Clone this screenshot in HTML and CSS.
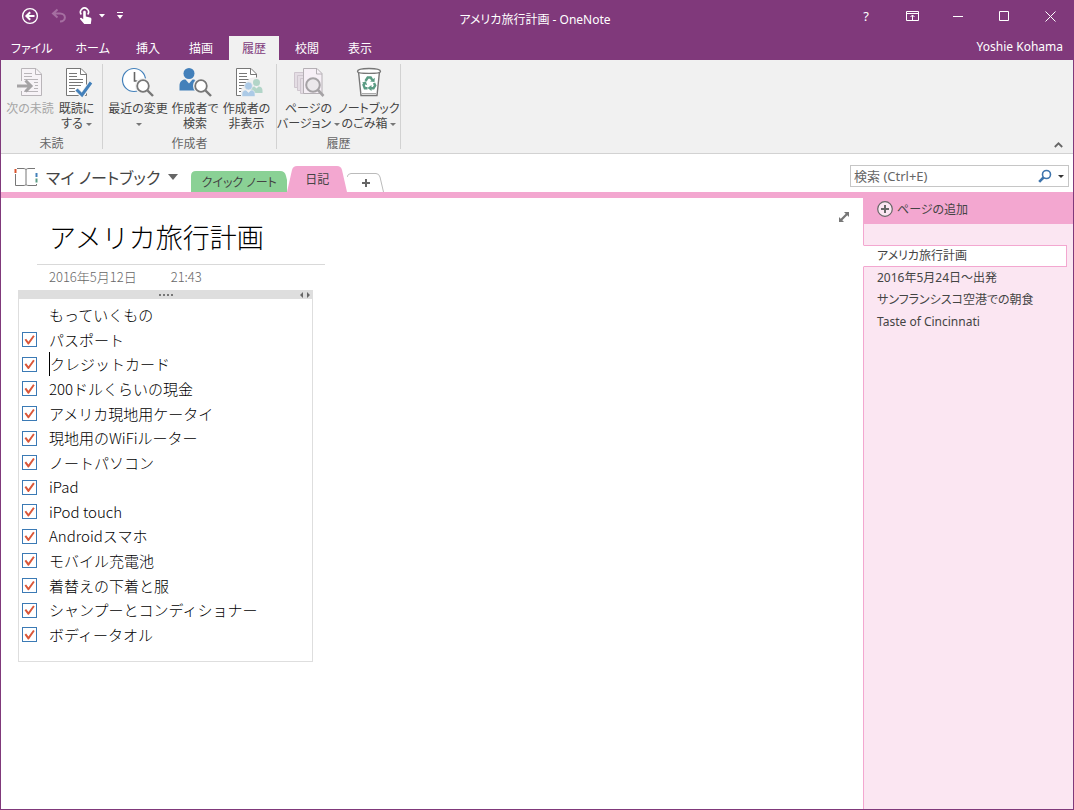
FILE: index.html
```html
<!DOCTYPE html>
<html lang="ja">
<head>
    <meta charset="UTF-8">
    <meta name="viewport" content="width=device-width, initial-scale=1.0">
    <title>アメリカ旅行計画 - OneNote</title>
    <link rel="stylesheet" href="styles.css">
</head>
<body>
    <div class="window">
        <header class="titlebar">
            <div class="quick-access">
                <button class="qa-button" aria-label="戻る">
                    <svg width="18" height="18" viewBox="0 0 18 18" fill="none" stroke="#fff"><circle cx="9" cy="9" r="7.4" stroke-width="1.4"/><path d="M13.5 9H6M9.2 5.2 5.4 9l3.8 3.8" stroke-width="2"/></svg>
                </button>
                <button class="qa-button" aria-label="元に戻す" disabled>
                    <svg width="16" height="16" viewBox="0 0 16 16" fill="none" stroke="#a56fa1" stroke-width="2"><path d="M6.5 1.5 2 5.5l4.5 4M2.5 5.5H9c6.5 0 6.5 8 0 8"/></svg>
                </button>
                <button class="qa-button qa-touch" aria-label="タッチ/マウス モードの切り替え">
                    <svg width="14" height="18" viewBox="0 0 14 18"><path d="M2.3 7.5a4 4 0 1 1 6.4 0" fill="none" stroke="#fff" stroke-width="1.6"/><path d="M4.2 5c0-1.8 2.600-1.800 2.600 0v4.500l4.200 1c1.200.3 1.600 1 1.400 2.200L11.800 17H5.200L1.200 12.300c-.8-1 .4-2 1.400-1.200l1.600 1.100z" fill="#fff"/></svg>
                    <svg width="6" height="4" viewBox="0 0 6 4"><path d="M0 0h6L3 3.500z" fill="#fff"/></svg>
                </button>
                <button class="qa-button" aria-label="クイック アクセス ツール バーのカスタマイズ">
                    <svg width="6" height="8" viewBox="0 0 6 8" fill="#fff"><path d="M0 0h6v1H0zM0 3h6L3 7z"/></svg>
                </button>
            </div>
            <div class="window-title">アメリカ旅行計画 - OneNote</div>
            <div class="window-controls">
                <button aria-label="ヘルプ">?</button>
                <button aria-label="リボンの表示オプション">
                    <svg width="13" height="10" viewBox="0 0 13 10" fill="none" stroke="#fff"><path d="M.5.5h12v9H.5zM.5 2.500h12M6.500 9V4M4.500 6l2-2 2 2"/></svg>
                </button>
                <button aria-label="最小化">
                    <svg width="10" height="10" viewBox="0 0 10 10"><path d="M0 5h10v1H0z" fill="#fff"/></svg>
                </button>
                <button aria-label="最大化">
                    <svg width="10" height="10" viewBox="0 0 10 10"><path d="M.5.5h9v9h-9z" fill="none" stroke="#fff"/></svg>
                </button>
                <button aria-label="閉じる">
                    <svg width="11" height="11" viewBox="0 0 11 11"><path d="m.5.5 10 10m0-10-10 10" stroke="#fff"/></svg>
                </button>
            </div>
        </header>

        <nav class="ribbon-tabs">
            <button class="ribbon-tab kana">ファイル</button>
            <button class="ribbon-tab kana">ホーム</button>
            <button class="ribbon-tab">挿入</button>
            <button class="ribbon-tab">描画</button>
            <button class="ribbon-tab active">履歴</button>
            <button class="ribbon-tab">校閲</button>
            <button class="ribbon-tab">表示</button>
            <a class="account" href="#">Yoshie Kohama</a>
        </nav>

        <div class="ribbon">
            <section class="group">
                <div class="group-buttons unread">
                    <button class="tool" disabled>
                        <svg width="32" height="32" viewBox="0 0 32 32" fill="none" stroke="#b9b5b9"><path d="M7.500 15V2.500H22l5.500 5.500v21.500h-20V25" fill="#f7f3f7"/><path d="M21.500 2.500v6h6M10 7.500h8M10 10.500h8M10 13.500h14M20 16.500h4M21 19.500h3M20 22.500h4M10 25.500h14"/><path d="M3 20h13M11.500 14.500 17 20l-5.500 5.500" stroke="#a5a3a5" stroke-width="3"/></svg>
                        <span>次の未読</span>
                    </button>
                    <button class="tool">
                        <svg width="32" height="32" viewBox="0 0 32 32" fill="none" stroke="#777"><path d="M5.500 2.500H20l5.500 5.500v21.500h-20z" fill="#fff"/><path d="M19.500 2.500v6h6M8 7.500h8M8 10.500h8M8 13.500h14M8 16.500h14M8 19.500h12M8 22.500h6M8 25.500h6"/><path d="m15.500 23.500 5.500 6 9-13" stroke="#f1f1f1" stroke-width="5"/><path d="m15.500 23.500 5.500 5.500 9-12.500" stroke="#4380ba" stroke-width="3"/></svg>
                        <span>既読に<br>する<i class="caret"></i></span>
                    </button>
                </div>
                <div class="group-name">未読</div>
            </section>
            <section class="group">
                <div class="group-buttons authors">
                    <button class="tool">
                        <svg width="34" height="32" viewBox="0 0 34 32" fill="none"><circle cx="13" cy="14" r="11.500" fill="#fff" stroke="#4380ba" stroke-width="1.200"/><path d="M13.500 6v9H19" stroke="#666" stroke-width="1.600"/><circle cx="22" cy="20" r="8" fill="#f1f1f1"/><path d="m26 24 6.500 6.500" stroke="#f1f1f1" stroke-width="5"/><circle cx="22" cy="20" r="5.800" fill="#fff" stroke="#777" stroke-width="1.800"/><path d="m26.500 24.500 5.500 5.500" stroke="#777" stroke-width="2.400"/></svg>
                        <span>最近の変更<br><i class="caret"></i></span>
                    </button>
                    <button class="tool">
                        <svg width="34" height="32" viewBox="0 0 34 32" fill="none"><circle cx="11" cy="7.500" r="5.500" fill="#4380ba"/><path d="M1.500 24.500V20c0-5 3-6.500 6-6.500l3.500 4 3.500-4c3 0 5.500 1.500 6 6.500v4.500z" fill="#4380ba"/><circle cx="23" cy="20" r="8" fill="#f1f1f1"/><circle cx="23" cy="20" r="5.800" fill="#fff" stroke="#777" stroke-width="1.800"/><path d="m27.500 24.500 5.500 5.500" stroke="#777" stroke-width="2.400"/></svg>
                        <span>作成者で<br>検索</span>
                    </button>
                    <button class="tool">
                        <svg width="32" height="32" viewBox="0 0 32 32" fill="none"><path d="M5.500 2.500H20l5.500 5.500v21.500h-20z" fill="#fff" stroke="#777"/><path d="M19.500 2.500v6h6M8 7.500h8M8 10.500h8M8 13.500h14M8 16.500h7M8 19.500h6M8 22.500h4M8 25.500h4" stroke="#777"/><path d="M10 31v-6c0-4 3-6 7-6l-2-3 4-4 6-1 4 4v5l3 3v8z" fill="#f1f1f1"/><circle cx="25.500" cy="16.500" r="3.500" fill="#b2d5c8"/><path d="M20 27v-2.500c0-2.500 1.500-4 3.500-4l2 2 2-2c2.500 0 4 1.500 4 4V27z" fill="#b2d5c8"/><circle cx="17.500" cy="20" r="4" fill="#accae6" stroke="#f1f1f1" stroke-width=".6"/><path d="M11 30.500V28c0-2.500 1.500-4 4-4l2.500 2.500L20 24c2.500 0 4 1.500 4 4v2.500z" fill="#accae6" stroke="#f1f1f1" stroke-width=".6"/></svg>
                        <span>作成者の<br>非表示</span>
                    </button>
                </div>
                <div class="group-name">作成者</div>
            </section>
            <section class="group">
                <div class="group-buttons history">
                    <button class="tool">
                        <svg width="32" height="32" viewBox="0 0 32 32" fill="none"><g fill="#e4dde4" stroke="#cfc6cf"><path d="M1.500 6.500h14v15h-14z"/><path d="M4.500 9.500h14v15h-14z"/><path d="M7.500 12.500h14v15h-14z"/></g><path d="M10.500 2.500H24l5 5v20H10.500z" fill="#f6eff6" stroke="#b5b0b5"/><path d="M23.500 2.500v5.500H29" stroke="#b5b0b5"/><circle cx="20" cy="19" r="6.800" fill="#ebe8eb" stroke="#a5a2a5" stroke-width="2"/><path d="m25 24 5.500 6" stroke="#a5a2a5" stroke-width="2.600"/></svg>
                        <span>ページの<br>バージョン<i class="caret"></i></span>
                    </button>
                    <button class="tool">
                        <svg width="32" height="32" viewBox="0 0 32 32" fill="none"><path d="M5.500 5.500h21L24 29.500H8z" fill="#fff" stroke="#777" stroke-width="1.400"/><path d="M4.500 5.500c0-4 23-4 23 0 0 2.500-23 2.500-23 0z" fill="#fff" stroke="#777" stroke-width="1.400"/><path d="M9 27.500h14" stroke="#aaa"/><g stroke="#5b9c84" stroke-width="2.400"><path d="m12.500 15 2.200-3.500h3l1.600 2.700"/><path d="m21 17 1.200 2.500-1.700 2.700h-3"/><path d="M14.500 22.200h-2.700L10.500 19l1.300-2"/></g><path d="m17 15.500 4.500.5.300-4.300zM18.500 19v6l-4-3zM9 16.800l3.800-1.500 1.400 4z" fill="#5b9c84"/></svg>
                        <span>ノートブック<br>のごみ箱<i class="caret"></i></span>
                    </button>
                </div>
                <div class="group-name">履歴</div>
            </section>
            <button class="collapse" aria-label="リボンを折りたたむ">
                <svg width="9" height="6" viewBox="0 0 9 6"><path d="m.8 5 3.700-3.700L8.200 5" fill="none" stroke="#666" stroke-width="1.800"/></svg>
            </button>
        </div>

        <div class="section-bar">
            <button class="notebook">
                <svg width="24" height="20" viewBox="0 0 24 20" fill="none" stroke="#777"><path d="M3 1.500h6c2 0 3 .5 3 1.500 0-1 1-1.500 3-1.500h6M1.500 7v11.500H9c2 0 3-.3 3-1 0 .7 1 1 3 1h7.500V17M12 3v14.500"/><path d="M1.500 2v4" stroke="#d9532c" stroke-width="2"/><path d="M22.500 6v4" stroke="#4380ba" stroke-width="2"/><path d="M22.500 11.500v4" stroke="#5b9c84" stroke-width="2"/></svg>
                <span>マイ ノートブック</span>
                <svg width="10" height="6" viewBox="0 0 10 6"><path d="M0 0h10L5 6z" fill="#666"/></svg>
            </button>
            <div class="section-tabs">
                <button class="section-tab quick">
                    <svg class="tab-shape" viewBox="0 0 96 21" preserveAspectRatio="none"><path d="M0 21V5q0-5 5-5h84q5 0 6 5l1 4v12z" fill="#8ad195"/></svg>
                    <span>クイック ノート</span>
                </button>
                <button class="section-tab diary">
                    <svg class="tab-shape" viewBox="0 0 60 26" preserveAspectRatio="none"><path d="M0 26 5 4q1-4 5-4h40q4 0 5 4l5 22z" fill="#f3a7d0"/></svg>
                    <span>日記</span>
                </button>
                <button class="section-tab add" aria-label="新しいセクションの作成">
                    <svg class="tab-shape" viewBox="0 0 37 19" preserveAspectRatio="none"><path d="M0 4q1-3.500 4-3.500h25q3 0 4 3.500l3.500 15" fill="none" stroke="#bbb"/></svg>
                    <svg width="8" height="8" viewBox="0 0 8 8"><path d="M4 0v8M0 4h8" stroke="#666" stroke-width="2"/></svg>
                </button>
            </div>
            <form class="search">
                <input type="text" placeholder="検索 (Ctrl+E)" aria-label="検索">
                <button type="button" aria-label="検索を実行">
                    <svg width="14" height="14" viewBox="0 0 14 14" fill="none" stroke="#3e74ac"><circle cx="8.500" cy="5.500" r="4" stroke-width="1.600"/><path d="M5.500 8.500 1.200 12.800" stroke-width="2.600"/></svg>
                    <svg width="6" height="3" viewBox="0 0 6 3"><path d="M0 0h6L3 3z" fill="#333"/></svg>
                </button>
            </form>
        </div>

        <div class="workspace">
            <main class="canvas">
                <article class="page">
                    <h1>アメリカ旅行計画</h1>
                    <div class="stamp"><span>2016年5月12日</span><span>21:43</span></div>
                    <div class="note">
                        <div class="note-handle">
                            <svg width="14" height="2" viewBox="0 0 14 2" fill="#777"><path d="M0 0h2v2H0zM4 0h2v2H4zM8 0h2v2H8zM12 0h2v2h-2z"/></svg>
                            <svg class="resize" width="10" height="6" viewBox="0 0 10 6" fill="#666"><path d="M3 0v6L0 3zM7 0v6l3-3z"/></svg>
                        </div>
                        <div class="note-body">
                            <div class="row plain">もっていくもの</div>
                            <label class="row"><input type="checkbox" checked><span>パスポート</span></label>
                            <label class="row"><input type="checkbox" checked><span class="cursor">クレジットカード</span></label>
                            <label class="row"><input type="checkbox" checked><span>200ドルくらいの現金</span></label>
                            <label class="row"><input type="checkbox" checked><span>アメリカ現地用ケータイ</span></label>
                            <label class="row"><input type="checkbox" checked><span>現地用のWiFiルーター</span></label>
                            <label class="row"><input type="checkbox" checked><span>ノートパソコン</span></label>
                            <label class="row"><input type="checkbox" checked><span>iPad</span></label>
                            <label class="row"><input type="checkbox" checked><span>iPod touch</span></label>
                            <label class="row"><input type="checkbox" checked><span>Androidスマホ</span></label>
                            <label class="row"><input type="checkbox" checked><span>モバイル充電池</span></label>
                            <label class="row"><input type="checkbox" checked><span>着替えの下着と服</span></label>
                            <label class="row"><input type="checkbox" checked><span>シャンプーとコンディショナー</span></label>
                            <label class="row"><input type="checkbox" checked><span>ボディータオル</span></label>
                        </div>
                    </div>
                </article>
                <button class="expand" aria-label="全画面表示">
                    <svg width="12" height="12" viewBox="0 0 12 12" fill="#777"><path d="M6 1h5v5L9.300 4.300 4.300 9.300 6 11H1V6l1.700 1.700 5-5z"/></svg>
                </button>
            </main>
            <aside class="pages">
                <button class="add-page">
                    <svg width="16" height="16" viewBox="0 0 16 16"><circle cx="8" cy="8" r="7.300" fill="#fbe6f2" stroke="#666" stroke-width="1.200"/><path d="M8 4v8M4 8h8" stroke="#666" stroke-width="2"/></svg>
                    <span>ページの追加</span>
                </button>
                <nav class="page-list">
                    <a class="current" href="#">アメリカ旅行計画</a>
                    <a href="#">2016年5月24日～出発</a>
                    <a href="#">サンフランシスコ空港での朝食</a>
                    <a href="#">Taste of Cincinnati</a>
                </nav>
            </aside>
        </div>
    </div>
</body>
</html>
```
FILE: styles.css
```css
* { margin: 0; padding: 0; box-sizing: border-box; }
body {
    font-family: "Noto Sans", "Noto Sans CJK JP", sans-serif;
    font-size: 12px;
    font-feature-settings: "palt";
    color: #444;
    background: #fff;
}
button, input {
    font: inherit;
    font-feature-settings: inherit;
    color: inherit;
    background: none;
    border: none;
}
button { display: flex; align-items: center; justify-content: center; white-space: nowrap; }
a { color: inherit; text-decoration: none; }
svg { display: block; flex: none; }

.window {
    min-height: 100vh;
    display: flex;
    flex-direction: column;
    border: 1px solid #80397b;
    border-top: none;
}

/* title bar */
.titlebar {
    display: grid;
    grid-template-columns: 1fr auto 1fr;
    height: 36px;
    background: #80397b;
    color: #fff;
}
.quick-access { display: flex; align-items: center; gap: 12px; height: 32px; padding-left: 20px; }
.qa-touch { gap: 6px; }
.window-title { align-self: center; padding: 2px 4px 0 0; }
.window-controls { display: flex; justify-content: flex-end; height: 32px; font-size: 13px; }
.window-controls button { width: 46px; }

/* ribbon tabs */
.ribbon-tabs {
    display: flex;
    gap: 3px;
    height: 24px;
    background: #80397b;
    color: #fff;
}
.ribbon-tab { padding: 0 13px; }
.ribbon-tab.kana { padding: 0 10px; }
.ribbon-tab.active { background: #f1f1f1; color: #80397b; }
.account { margin-left: auto; padding-right: 10px; line-height: 22px; }

/* ribbon */
.ribbon {
    display: flex;
    height: 94px;
    padding: 4px 0;
    background: #f1f1f1;
    border-bottom: 1px solid #d2d2d2;
}
.group {
    display: flex;
    flex-direction: column;
    justify-content: space-between;
    border-right: 1px solid #d2d2d2;
}
.group-buttons { display: grid; padding: 2px 4px 0; }
.unread { grid-template-columns: 50px 43px; }
.authors { grid-template-columns: 62px 52px 51px; }
.group-buttons.history { grid-template-columns: 61px 60px; padding: 2px 1px 0; }
.tool {
    flex-direction: column;
    justify-content: flex-start;
    gap: 3px;
    line-height: 15px;
}
.tool:disabled { color: #a6a6a6; }
.caret {
    display: inline-block;
    margin-left: 3px;
    vertical-align: middle;
    border: 3px solid transparent;
    border-top-color: #777;
    border-bottom: none;
}
.group-name { text-align: center; line-height: 10px; color: #666; }
.collapse { margin: auto 10px 1px auto; }

/* notebook and sections */
.section-bar {
    display: flex;
    align-items: flex-end;
    height: 44px;
    border-bottom: 6px solid #f3a7d0;
}
.notebook { align-self: center; gap: 8px; padding: 8px 13px 0; font-size: 16px; }
.section-tabs { display: flex; align-items: flex-end; }
.section-tab { position: relative; }
.section-tab span { position: relative; }
.tab-shape { position: absolute; inset: 0; width: 100%; height: 100%; }
.quick { width: 96px; height: 21px; }
.diary { width: 60px; height: 26px; }
.add { width: 37px; height: 19px; }
.search {
    display: flex;
    width: 219px;
    height: 22px;
    margin: 0 4px 5px auto;
    border: 1px solid #c6c6c6;
    font-size: 13px;
}
.search input { flex: 1; min-width: 0; padding-left: 3px; outline: none; }
.search input::placeholder { color: #666; }
.search button { gap: 6px; padding: 0 4px; }

/* page area */
.workspace { flex: 1; display: flex; }
.canvas { flex: 1; display: flex; justify-content: space-between; align-items: flex-start; padding-left: 17px; }
.page {
    width: 307px;
    padding-top: 18px;
    font-family: "Noto Sans CJK JP", sans-serif;
    font-feature-settings: normal;
    color: #000;
}
.page h1 {
    margin-left: 19px;
    padding: 0 0 6px 12px;
    border-bottom: 1px solid #d9d9d9;
    font-size: 27px;
    font-weight: 300;
    line-height: 42px;
    white-space: nowrap;
}
.stamp {
    display: flex;
    gap: 34px;
    padding: 0 0 2px 31px;
    font-size: 13px;
    font-weight: 300;
    line-height: 23px;
    color: #666;
}
.note { width: 295px; border: 1px solid #dedede; border-top: none; }
.note-handle {
    position: relative;
    display: flex;
    align-items: center;
    justify-content: center;
    height: 9px;
    background: #dedede;
}
.resize { position: absolute; right: 2px; }
.note-body {
    display: grid;
    grid-auto-rows: 1fr;
    min-height: 362px;
    padding: 4px 3px 14px;
    font-size: 15px;
    font-weight: 300;
    line-height: 24px;
}
.row { display: flex; align-items: center; gap: 12px; }
.row.plain { padding-left: 27px; }
.row input {
    appearance: none;
    width: 15px;
    height: 15px;
    border: 1px solid #3b7ab5;
    background: #fff;
}
.row input:checked::before {
    content: "";
    display: block;
    height: 13px;
    background: #d9573a;
    clip-path: polygon(12% 50%, 24% 41%, 42% 64%, 78% 14%, 90% 22%, 45% 86%, 38% 86%);
}
.cursor { border-left: 1px solid #000; }
.expand { padding: 13px 13px 0 0; }

/* page list */
.pages { width: 210px; background: #fbe6f2; border-left: 1px solid #f3a7d0; color: #444; }
.add-page {
    width: 100%;
    height: 26px;
    gap: 4px;
    justify-content: flex-start;
    padding: 0 0 4px 13px;
    background: #f3a7d0;
}
.page-list { display: flex; flex-direction: column; margin: 21px 6px 0 -1px; }
.page-list a { padding-left: 14px; line-height: 22px; white-space: nowrap; }
.page-list .current {
    padding-left: 13px;
    border: 1px solid #f3a7d0;
    border-left-color: #fff;
    background: #fff;
    line-height: 20px;
}
```
